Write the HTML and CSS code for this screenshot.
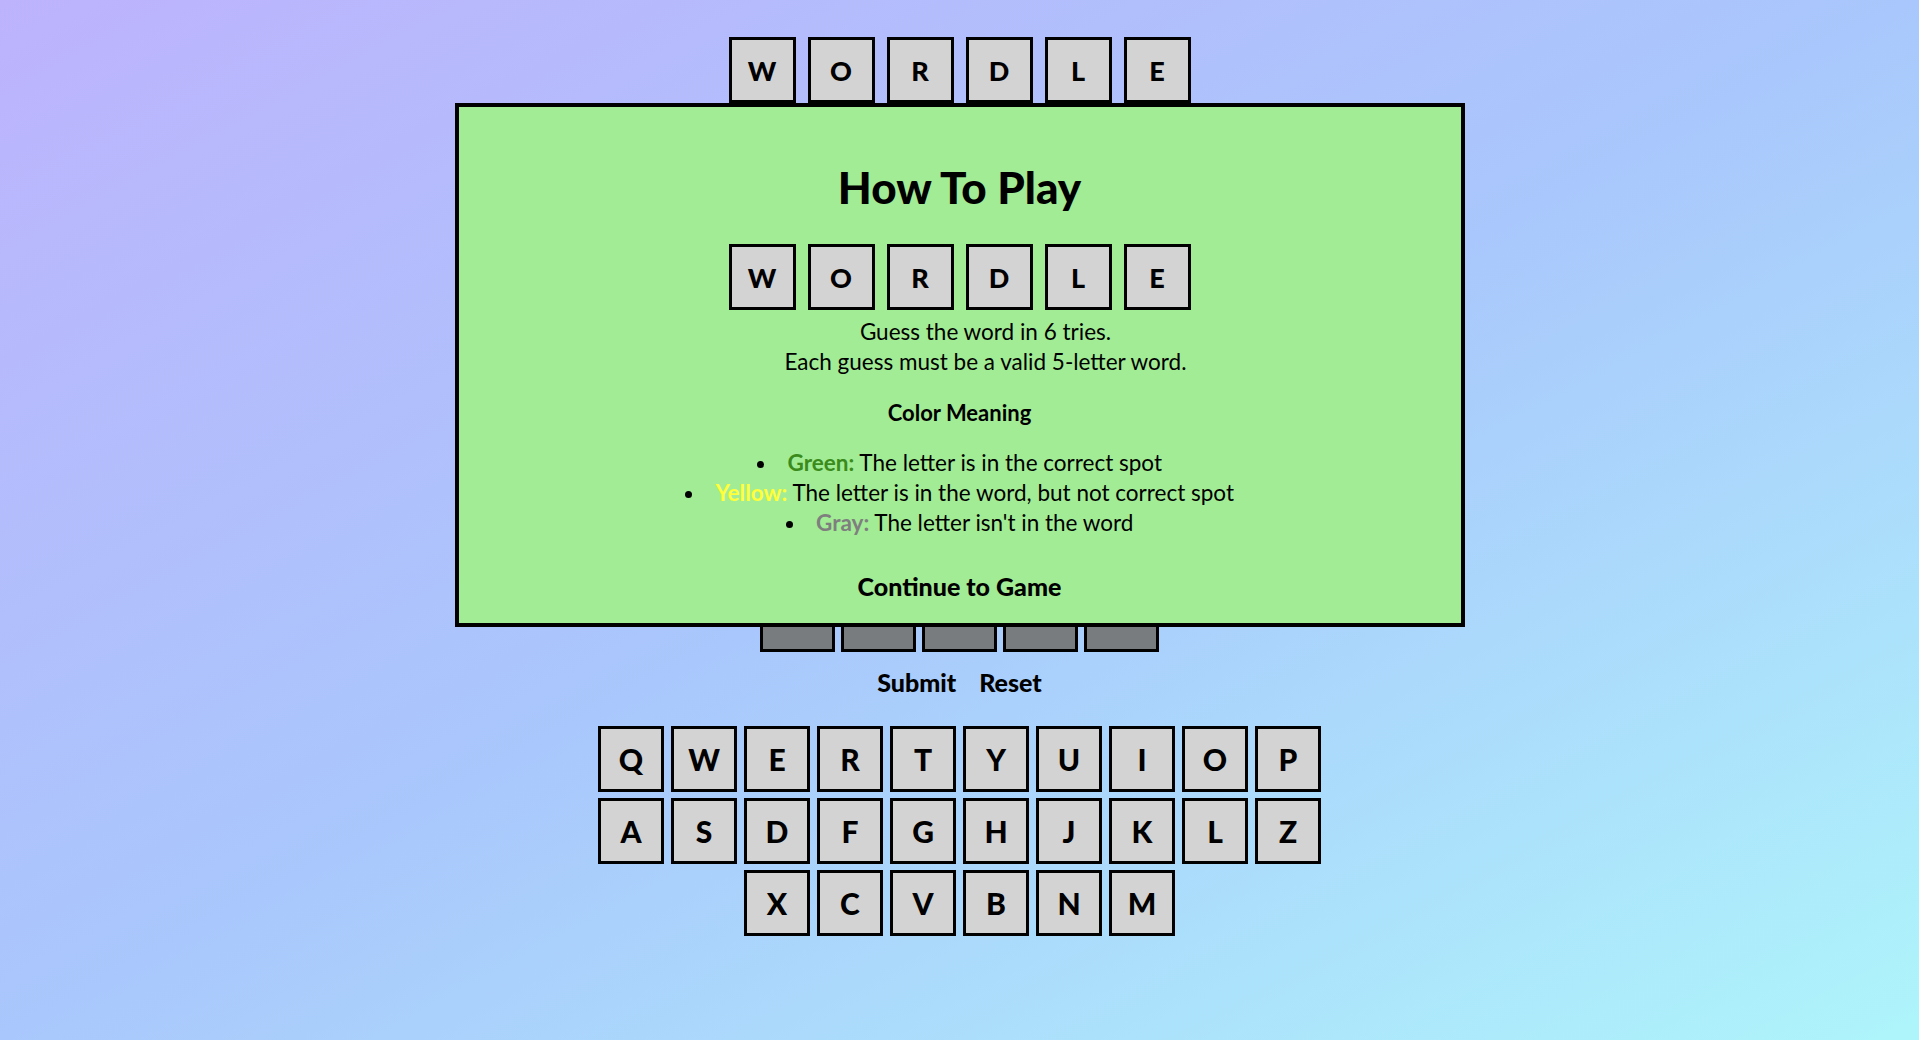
FILE: index.html
```html
<!DOCTYPE html>
<html lang="en">
<head>
<meta charset="utf-8">
<title>Wordle</title>
<link rel="stylesheet" href="styles.css">
</head>
<body>
<div class="page">
  <header class="title-row">
    <div class="tile">W</div><div class="tile">O</div><div class="tile">R</div><div class="tile">D</div><div class="tile">L</div><div class="tile">E</div>
  </header>

  <main class="board">
    <div class="row"><div class="cell"></div><div class="cell"></div><div class="cell"></div><div class="cell"></div><div class="cell"></div></div>
    <div class="row"><div class="cell"></div><div class="cell"></div><div class="cell"></div><div class="cell"></div><div class="cell"></div></div>
    <div class="row"><div class="cell"></div><div class="cell"></div><div class="cell"></div><div class="cell"></div><div class="cell"></div></div>
    <div class="row"><div class="cell"></div><div class="cell"></div><div class="cell"></div><div class="cell"></div><div class="cell"></div></div>
    <div class="row"><div class="cell"></div><div class="cell"></div><div class="cell"></div><div class="cell"></div><div class="cell"></div></div>
    <div class="row"><div class="cell"></div><div class="cell"></div><div class="cell"></div><div class="cell"></div><div class="cell"></div></div>
  </main>

  <div class="actions">
    <button class="action">Submit</button>
    <button class="action">Reset</button>
  </div>

  <section class="keyboard">
    <div class="krow">
      <div class="key">Q</div><div class="key">W</div><div class="key">E</div><div class="key">R</div><div class="key">T</div><div class="key">Y</div><div class="key">U</div><div class="key">I</div><div class="key">O</div><div class="key">P</div>
    </div>
    <div class="krow">
      <div class="key">A</div><div class="key">S</div><div class="key">D</div><div class="key">F</div><div class="key">G</div><div class="key">H</div><div class="key">J</div><div class="key">K</div><div class="key">L</div><div class="key">Z</div>
    </div>
    <div class="krow">
      <div class="key">X</div><div class="key">C</div><div class="key">V</div><div class="key">B</div><div class="key">N</div><div class="key">M</div>
    </div>
  </section>

  <div class="modal">
    <h1 class="modal-title">How To Play</h1>
    <div class="modal-tiles">
      <div class="tile">W</div><div class="tile">O</div><div class="tile">R</div><div class="tile">D</div><div class="tile">L</div><div class="tile">E</div>
    </div>
    <p class="rules">Guess the word in 6 tries.<br>Each guess must be a valid 5-letter word.</p>
    <h2 class="subhead">Color Meaning</h2>
    <ul class="legend">
      <li><span class="c-green">Green:</span> The letter is in the correct spot</li>
      <li><span class="c-yellow">Yellow:</span> The letter is in the word, but not correct spot</li>
      <li><span class="c-gray">Gray:</span> The letter isn't in the word</li>
    </ul>
    <button class="continue">Continue to Game</button>
  </div>
</div>
</body>
</html>
```

FILE: styles.css
```css
* { box-sizing: border-box; }

html, body {
  margin: 0;
  padding: 0;
}

body {
  min-height: 100vh;
  background: linear-gradient(to bottom right, #bdb3fd 0%, #a9c7fc 50%, #aef5fb 100%);
  font-family: "Lato", "Open Sans", sans-serif;
  color: #000;
}

.page {
  position: relative;
  min-height: 100vh;
  display: flex;
  flex-direction: column;
  align-items: center;
}

.title-row {
  display: flex;
  gap: 12px;
  padding-top: 37px;
}

.tile {
  width: 67px;
  height: 66px;
  border: 3px solid #000;
  background: #d3d3d3;
  display: flex;
  align-items: center;
  justify-content: center;
  font-weight: 900;
  font-size: 27px;
}

.board {
  margin-top: 69px;
  display: flex;
  flex-direction: column;
  gap: 6px;
}

.row {
  display: flex;
  gap: 6px;
}

.cell {
  width: 75px;
  height: 75px;
  border: 3px solid #000;
  background: #787c7e;
}

.actions {
  display: flex;
  gap: 23px;
  margin-top: 13px;
}

.action {
  background: none;
  border: none;
  padding: 0;
  font-family: inherit;
  font-weight: 900;
  font-size: 25px;
  line-height: 34px;
  color: #000;
}

.keyboard {
  margin-top: 27px;
  display: flex;
  flex-direction: column;
  align-items: center;
  gap: 6px;
}

.krow {
  display: flex;
  gap: 7px;
}

.key {
  width: 66px;
  height: 66px;
  border: 3px solid #000;
  background: #d3d3d3;
  display: flex;
  align-items: center;
  justify-content: center;
  font-weight: 900;
  font-size: 30px;
}

.modal {
  position: absolute;
  top: 103px;
  left: 0;
  right: 0;
  margin: 0 auto;
  width: 1010px;
  height: 524px;
  border: 4px solid #000;
  background: #a2ec95;
  display: flex;
  flex-direction: column;
  align-items: center;
  text-align: center;
}

.modal-title {
  margin: 52px 0 0;
  font-size: 44px;
  line-height: 56px;
  font-weight: 900;
}

.modal-tiles {
  display: flex;
  gap: 12px;
  margin-top: 29px;
}

.rules {
  margin: 7px 0 0;
  padding-left: 52px;
  font-size: 22.5px;
  line-height: 30px;
}

.subhead {
  margin: 21px 0 0;
  font-size: 22px;
  line-height: 30px;
  font-weight: 700;
}

.legend {
  list-style: disc inside;
  padding: 0;
  margin: 20px 0 0;
  font-size: 22.5px;
  line-height: 30px;
}

.c-green { color: #3b8a1c; font-weight: 700; }
.c-yellow { color: #ffff3a; font-weight: 700; }
.c-gray { color: #7f7f7f; font-weight: 700; }

.continue {
  margin-top: 33px;
  background: none;
  border: none;
  padding: 0;
  font-family: inherit;
  font-weight: 900;
  font-size: 25px;
  line-height: 30px;
  color: #000;
}
```
